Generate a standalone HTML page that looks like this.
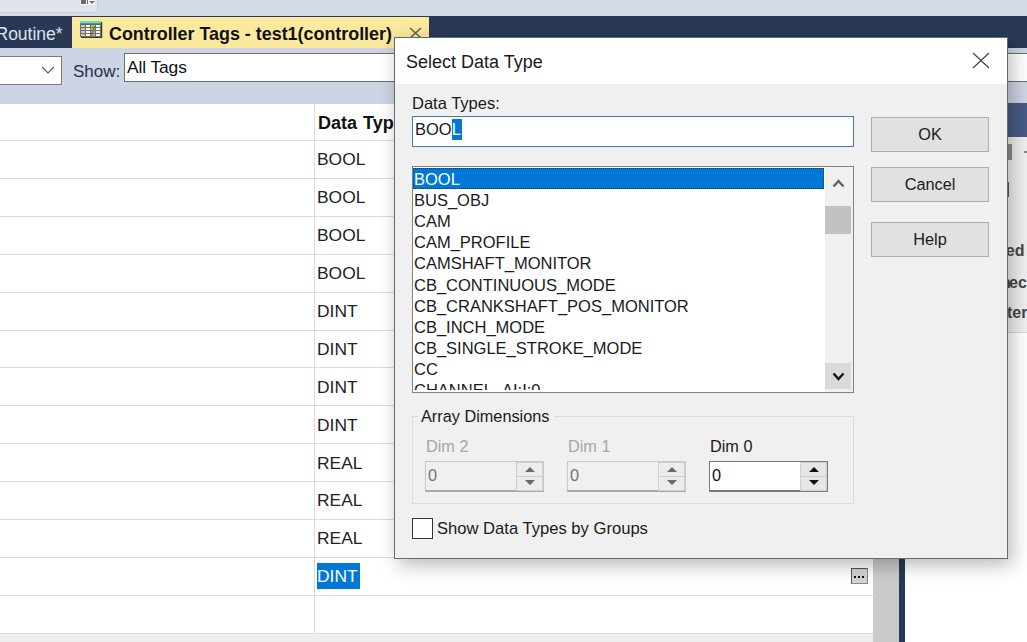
<!DOCTYPE html>
<html><head><meta charset="utf-8">
<style>
*{margin:0;padding:0;box-sizing:border-box}
html,body{width:1027px;height:642px;overflow:hidden;position:relative;background:#d6dbe8;font-family:"Liberation Sans",sans-serif;color:#000}
.a{position:absolute}
.t{position:absolute;white-space:nowrap;line-height:1}
</style></head><body>

<!-- top strip -->
<div class="a" style="left:0;top:0;width:1027px;height:16px;background:#d5dae7"></div>
<div class="a" style="left:0;top:0;width:98px;height:13px;background:#dfe3ec;border-right:1px solid #ccd1dc;border-bottom:1px solid #ccd1dc"></div>
<div class="a" style="left:80px;top:0;width:15px;height:5px;background:#f4f5f8"></div><div class="a" style="left:81px;top:0;width:5px;height:4px;background:#6e6e6e"></div><div class="a" style="left:86.5px;top:0;width:1px;height:4px;background:#6e6e6e"></div>
<div class="a" style="left:89px;top:1px;width:0;height:0;border-left:3px solid transparent;border-right:3px solid transparent;border-top:3px solid #6e6e6e"></div>

<!-- navy tab band -->
<div class="a" style="left:0;top:16px;width:1027px;height:32px;background:#293955"></div>
<div class="t" style="left:-4.5px;top:26px;font-size:17.5px;color:#dfe3ea">Routine*</div>

<!-- active yellow tab -->
<div class="a" style="left:72px;top:17px;width:357px;height:31px;background:#fbe99e"></div>
<!-- tab icon -->
<svg class="a" style="left:80px;top:20px" width="23" height="18" viewBox="0 0 23 18">
 <rect x="0" y="1" width="21" height="3" fill="#6fdcc4"/>
 <rect x="0" y="4" width="21" height="13" fill="#707066"/>
 <g fill="#c4c4c4">
  <rect x="1" y="5" width="4" height="2"/><rect x="1" y="8" width="4" height="2"/><rect x="1" y="11" width="4" height="2"/><rect x="1" y="14" width="4" height="2"/>
 </g>
 <g fill="#f6f6f2">
  <rect x="6" y="5" width="4" height="2"/><rect x="6" y="8" width="4" height="2"/><rect x="6" y="11" width="4" height="2"/><rect x="6" y="14" width="4" height="2"/>
  <rect x="16" y="5" width="4" height="2"/><rect x="16" y="8" width="4" height="2"/><rect x="16" y="11" width="4" height="2"/><rect x="16" y="14" width="4" height="2"/>
 </g>
 <g fill="#b8b46a">
  <rect x="11" y="5" width="4" height="2"/><rect x="11" y="8" width="4" height="2"/><rect x="11" y="11" width="4" height="2"/><rect x="11" y="14" width="4" height="2"/>
 </g>
 <path d="M11 16 L15 6" stroke="#555" stroke-width="0.8"/>
 <rect x="1" y="17" width="21" height="1" fill="#3a3a30"/>
 <rect x="21" y="2" width="1.2" height="16" fill="#3a3a30"/>
 <rect x="0" y="3.5" width="21" height="0.8" fill="#2a5a50"/>
</svg>
<div class="t" style="left:109px;top:25.5px;font-size:17.9px;font-weight:bold;color:#111">Controller Tags - test1(controller)</div>
<svg class="a" style="left:409px;top:27px" width="13" height="12" viewBox="0 0 13 12"><path d="M1 1 L12 11 M12 1 L1 11" stroke="#6b6040" stroke-width="1.6"/></svg>

<!-- toolbar band -->
<div class="a" style="left:0;top:48px;width:1027px;height:56px;background:#cdd4e3"></div>
<div class="a" style="left:-3px;top:56px;width:65px;height:29px;background:#fff;border:1px solid #7a7a7a"></div>
<svg class="a" style="left:41px;top:66px" width="14" height="9" viewBox="0 0 14 9"><path d="M1 1 L7 7 L13 1" fill="none" stroke="#5a5a5a" stroke-width="1.1"/></svg>
<div class="t" style="left:73px;top:63px;font-size:17px;color:#24314d">Show:</div>
<div class="a" style="left:124px;top:53px;width:910px;height:29px;background:#fff;border:1px solid #6e6e6e"></div>
<div class="t" style="left:127px;top:59.1px;font-size:17.4px;letter-spacing:-0.1px;color:#111">All Tags</div>

<!-- table -->
<div class="a" id="tbl" style="left:0;top:104px;width:873px;height:529px;background:#fff"></div>
<div class="a" style="left:0;top:633px;width:873px;height:9px;background:#efefef;border-top:1px solid #dddddd"></div>
<div class="a" style="left:314px;top:104px;width:1px;height:529px;background:#dcdcdc"></div>
<div class="t" style="left:318px;top:113.5px;font-size:18px;font-weight:bold;word-spacing:1px;color:#111">Data Type</div>
<div class="a" style="left:0;top:140px;width:873px;height:1px;background:#dcdcdc"></div>
<div class="a" style="left:0;top:178px;width:873px;height:1px;background:#dcdcdc"></div>
<div class="a" style="left:0;top:216px;width:873px;height:1px;background:#dcdcdc"></div>
<div class="a" style="left:0;top:254px;width:873px;height:1px;background:#dcdcdc"></div>
<div class="a" style="left:0;top:292px;width:873px;height:1px;background:#dcdcdc"></div>
<div class="a" style="left:0;top:330px;width:873px;height:1px;background:#dcdcdc"></div>
<div class="a" style="left:0;top:367px;width:873px;height:1px;background:#dcdcdc"></div>
<div class="a" style="left:0;top:405px;width:873px;height:1px;background:#dcdcdc"></div>
<div class="a" style="left:0;top:443px;width:873px;height:1px;background:#dcdcdc"></div>
<div class="a" style="left:0;top:481px;width:873px;height:1px;background:#dcdcdc"></div>
<div class="a" style="left:0;top:519px;width:873px;height:1px;background:#dcdcdc"></div>
<div class="a" style="left:0;top:557px;width:873px;height:1px;background:#dcdcdc"></div>
<div class="a" style="left:0;top:595px;width:873px;height:1px;background:#dcdcdc"></div>
<div class="t" style="left:317px;top:151.3px;font-size:17.4px;color:#222">BOOL</div>
<div class="t" style="left:317px;top:189.2px;font-size:17.4px;color:#222">BOOL</div>
<div class="t" style="left:317px;top:227.1px;font-size:17.4px;color:#222">BOOL</div>
<div class="t" style="left:317px;top:265.0px;font-size:17.4px;color:#222">BOOL</div>
<div class="t" style="left:317px;top:302.9px;font-size:17.4px;color:#222">DINT</div>
<div class="t" style="left:317px;top:340.8px;font-size:17.4px;color:#222">DINT</div>
<div class="t" style="left:317px;top:378.7px;font-size:17.4px;color:#222">DINT</div>
<div class="t" style="left:317px;top:416.6px;font-size:17.4px;color:#222">DINT</div>
<div class="t" style="left:317px;top:454.5px;font-size:17.4px;color:#222">REAL</div>
<div class="t" style="left:317px;top:492.4px;font-size:17.4px;color:#222">REAL</div>
<div class="t" style="left:317px;top:530.3px;font-size:17.4px;color:#222">REAL</div>
<div class="a" style="left:317px;top:563px;width:43px;height:26px;background:#0078d7"></div>
<div class="t" style="left:317px;top:568.2px;font-size:17.4px;color:#fff">DINT</div>
<div class="a" style="left:851px;top:568px;width:17px;height:16px;background:#d4d4d4;border:1px solid #555;border-right-color:#888;border-bottom-color:#888"></div>
<div class="a" style="left:854px;top:576px;width:2px;height:2px;background:#111"></div><div class="a" style="left:858px;top:576px;width:2px;height:2px;background:#111"></div><div class="a" style="left:862px;top:576px;width:2px;height:2px;background:#111"></div>

<!-- right side panels -->
<div class="a" style="left:873px;top:104px;width:26px;height:538px;background:#cbcbcb"></div>
<div class="a" style="left:899px;top:48px;width:6px;height:594px;background:#293955"></div>
<div class="a" style="left:905px;top:103px;width:122px;height:539px;background:#fff"></div>
<div class="a" style="left:905px;top:103px;width:122px;height:34px;background:#475a84"></div>
<div class="a" style="left:905px;top:137px;width:122px;height:196px;background:#efefef;border-bottom:1px solid #d8d8d8"></div>
<div class="a" style="left:1006px;top:144px;width:6px;height:16px;background:#8e8e8e"></div>
<div class="a" style="left:1024px;top:151px;width:3px;height:2px;background:#888"></div>
<div class="a" style="left:1008px;top:182px;width:1px;height:15px;background:#505868"></div>
<div class="t" style="left:900px;width:124.5px;text-align:right;top:243px;font-size:16px;font-weight:bold;color:#454545">ed</div>
<div class="t" style="left:1009px;top:275px;font-size:16px;font-weight:bold;color:#454545">ec</div>
<div class="t" style="left:1001px;top:274.5px;font-size:16px;font-weight:bold;color:#454545">n</div>
<div class="t" style="left:1007px;top:305px;font-size:16px;font-weight:bold;color:#454545">ter</div>

<!-- dialog -->
<div class="a" style="left:394px;top:37px;width:614px;height:522px;background:#f0f0f0;border:1px solid #6a6a6a;box-shadow:4px 6px 18px rgba(0,0,0,0.28)"></div>
<div class="a" style="left:395px;top:38px;width:612px;height:46px;background:#fff"></div>
<div class="t" style="left:406px;top:53px;font-size:18px;color:#1a1a1a">Select Data Type</div>
<svg class="a" style="left:972px;top:52px" width="18" height="17" viewBox="0 0 18 17"><path d="M1 1 L17 16 M17 1 L1 16" stroke="#3a3a3a" stroke-width="1.05"/></svg>
<div class="t" style="left:412px;top:95px;font-size:16.5px;color:#1a1a1a">Data Types:</div>
<div class="a" style="left:412px;top:116px;width:442px;height:31px;background:#fff;border:1px solid #4a7ba6"></div>
<div class="a" style="left:452px;top:119px;width:10px;height:21px;background:#0078d7"></div>
<div class="t" style="left:415px;top:121px;font-size:16.5px;color:#1a1a1a">BOO<span style="color:#fff">L</span></div>
<div class="a" style="left:412px;top:166px;width:442px;height:227px;background:#fff;border:1px solid #828282"></div>
<div class="a" style="left:413px;top:167px;width:412px;height:223px;overflow:hidden">
<div class="a" style="left:0px;top:1px;width:411px;height:21px;background:#0078d7;outline:1px dotted #1a3550;outline-offset:-1px"></div>

<div class="t" style="left:1px;top:4px;font-size:16.5px;color:#fff">BOOL</div>
<div class="t" style="left:1px;top:25px;font-size:16.5px;color:#1a1a1a">BUS_OBJ</div>
<div class="t" style="left:1px;top:46px;font-size:16.5px;color:#1a1a1a">CAM</div>
<div class="t" style="left:1px;top:67px;font-size:16.5px;color:#1a1a1a">CAM_PROFILE</div>
<div class="t" style="left:1px;top:88px;font-size:16.5px;color:#1a1a1a">CAMSHAFT_MONITOR</div>
<div class="t" style="left:1px;top:110px;font-size:16.5px;color:#1a1a1a">CB_CONTINUOUS_MODE</div>
<div class="t" style="left:1px;top:131px;font-size:16.5px;color:#1a1a1a">CB_CRANKSHAFT_POS_MONITOR</div>
<div class="t" style="left:1px;top:152px;font-size:16.5px;color:#1a1a1a">CB_INCH_MODE</div>
<div class="t" style="left:1px;top:173px;font-size:16.5px;color:#1a1a1a">CB_SINGLE_STROKE_MODE</div>
<div class="t" style="left:1px;top:194px;font-size:16.5px;color:#1a1a1a">CC</div>
<div class="t" style="left:1px;top:215px;font-size:16.5px;color:#1a1a1a">CHANNEL_AI:I:0</div>
</div>
<div class="a" style="left:825px;top:167px;width:28px;height:225px;background:#f0f0f0"></div>
<svg class="a" style="left:832px;top:178px" width="13" height="10" viewBox="0 0 13 10"><path d="M1.5 8.5 L6.5 3 L11.5 8.5" fill="none" stroke="#606060" stroke-width="2.4"/></svg>
<div class="a" style="left:825px;top:206px;width:26px;height:28px;background:#c2c2c2"></div>
<div class="a" style="left:825px;top:363px;width:26px;height:26px;background:#dadada"></div>
<svg class="a" style="left:832px;top:372px" width="13" height="10" viewBox="0 0 13 10"><path d="M1.5 1.5 L6.5 7 L11.5 1.5" fill="none" stroke="#111" stroke-width="2.4"/></svg>

<!-- group box -->
<div class="a" style="left:412px;top:416px;width:442px;height:88px;border:1px solid #dcdcdc"></div>
<div class="a" style="left:418px;top:406px;width:136px;height:18px;background:#f0f0f0"></div>
<div class="t" style="left:421px;top:408px;font-size:16.3px;color:#1a1a1a">Array Dimensions</div>

<div class="t" style="left:426px;top:438px;font-size:16.3px;color:#a6a6a6">Dim 2</div>
<div class="a" style="left:425px;top:461px;width:119px;height:31px;background:#f0f0f0;border:1px solid #c8c8c8;border-bottom:2px solid #a9a9a9"></div>
<div class="t" style="left:428px;top:467px;font-size:16.3px;color:#747474">0</div>
<div class="a" style="left:516px;top:462px;width:27px;height:29px;background:#ececec;border:1px solid #cfcfcf"></div>
<div class="a" style="left:516px;top:476px;width:27px;height:1px;background:#cfcfcf"></div>
<svg class="a" style="left:523px;top:464px" width="14" height="24" viewBox="0 0 14 24"><path d="M2 8 L7 3 L12 8Z M2 16 L7 21 L12 16Z" fill="#6a6a6a"/></svg>
<div class="t" style="left:568px;top:438px;font-size:16.3px;color:#a6a6a6">Dim 1</div>
<div class="a" style="left:567px;top:461px;width:119px;height:31px;background:#f0f0f0;border:1px solid #c8c8c8;border-bottom:2px solid #a9a9a9"></div>
<div class="t" style="left:570px;top:467px;font-size:16.3px;color:#747474">0</div>
<div class="a" style="left:658px;top:462px;width:27px;height:29px;background:#ececec;border:1px solid #cfcfcf"></div>
<div class="a" style="left:658px;top:476px;width:27px;height:1px;background:#cfcfcf"></div>
<svg class="a" style="left:665px;top:464px" width="14" height="24" viewBox="0 0 14 24"><path d="M2 8 L7 3 L12 8Z M2 16 L7 21 L12 16Z" fill="#6a6a6a"/></svg>
<div class="t" style="left:710px;top:438px;font-size:16.3px;color:#1a1a1a">Dim 0</div>
<div class="a" style="left:709px;top:461px;width:119px;height:31px;background:#fff;border:1px solid #7a7a7a;border-bottom:2px solid #7a7a7a"></div>
<div class="t" style="left:712px;top:467px;font-size:16.3px;color:#111">0</div>
<div class="a" style="left:800px;top:462px;width:27px;height:29px;background:#e6e6e6;border:1px solid #cfcfcf"></div>
<div class="a" style="left:800px;top:476px;width:27px;height:1px;background:#cfcfcf"></div>
<svg class="a" style="left:807px;top:464px" width="14" height="24" viewBox="0 0 14 24"><path d="M2 8 L7 3 L12 8Z M2 16 L7 21 L12 16Z" fill="#111"/></svg>
<div class="a" style="left:412px;top:518px;width:21px;height:21px;background:#fff;border:1px solid #333"></div>
<div class="t" style="left:437px;top:520.8px;font-size:16.6px;color:#1a1a1a">Show Data Types by Groups</div>

<div class="a" style="left:871px;top:117px;width:118px;height:35px;background:#e1e1e1;border:1px solid #adadad"></div>
<div class="t" style="left:871px;width:118px;text-align:center;top:126px;font-size:16.3px;color:#1a1a1a">OK</div>
<div class="a" style="left:871px;top:167px;width:118px;height:35px;background:#e1e1e1;border:1px solid #adadad"></div>
<div class="t" style="left:871px;width:118px;text-align:center;top:176px;font-size:16.3px;color:#1a1a1a">Cancel</div>
<div class="a" style="left:871px;top:222px;width:118px;height:35px;background:#e1e1e1;border:1px solid #adadad"></div>
<div class="t" style="left:871px;width:118px;text-align:center;top:231px;font-size:16.3px;color:#1a1a1a">Help</div>
</body></html>
